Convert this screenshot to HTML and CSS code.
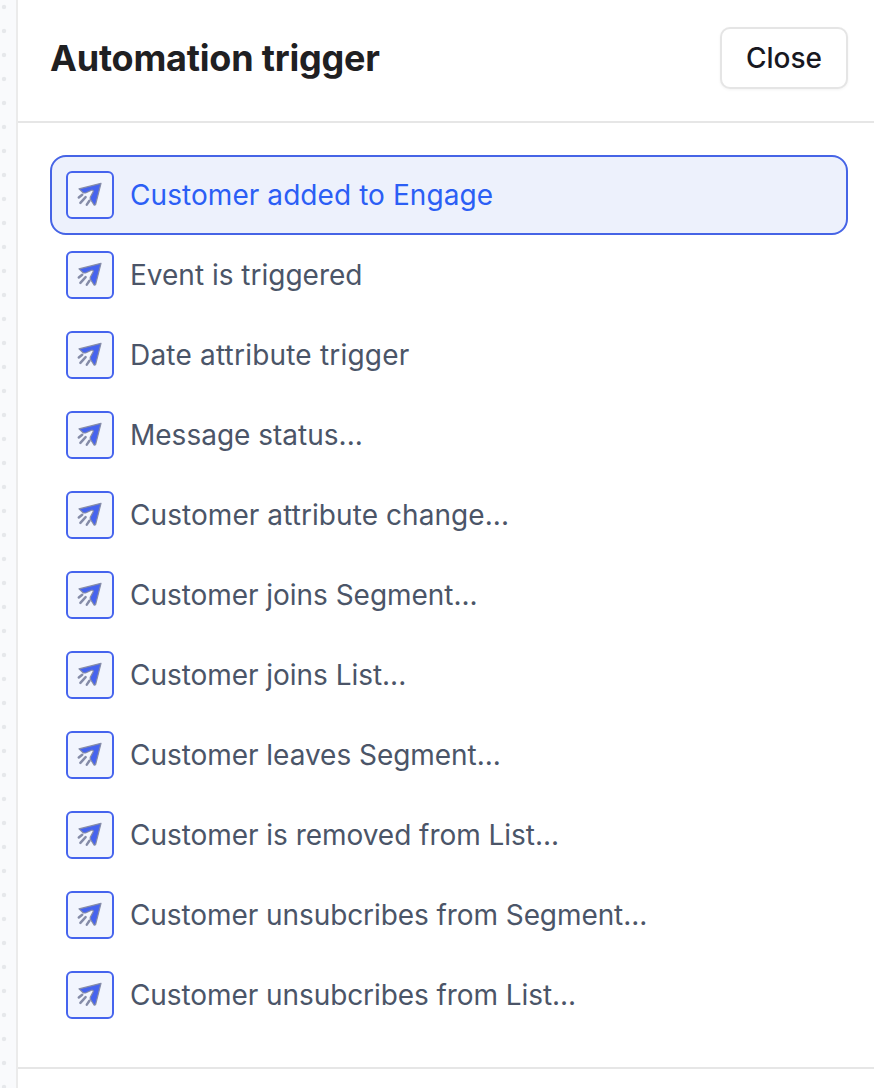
FILE: index.html
```html
<!DOCTYPE html>
<html lang="en"><head><meta charset="utf-8"><title>Automation trigger</title><link rel="stylesheet" href="styles.css"></head>
<body>
<svg width="0" height="0" class="defs"><symbol id="send" viewBox="0 0 48 48"><path d="M35 12.3 13 17.9l4.4 4.1h2.2l5.8-2.8c1.2-.6 2.3.6 1.7 1.7l-2.9 5.3v1.8l4 6.2 1.4-.6z" fill="#4664ee" stroke="#858ca8" stroke-width="1.2" stroke-linejoin="round"/><path d="m16.2 23.7-3.4 2.7M19.6 26.2l-5.2 5.6M23.4 29.8l-2.6 3.8" fill="none" stroke="#858ca8" stroke-width="2.5" stroke-linecap="round"/></symbol></svg>
<div class="canvas"></div>
<main class="panel">
<header class="head"><h1 class="title">Automation trigger</h1><button class="close">Close</button></header>
<ul class="list">
<li class="item active"><span class="icon"><svg><use href="#send"/></svg></span>Customer added to Engage</li>
<li class="item"><span class="icon"><svg><use href="#send"/></svg></span>Event is triggered</li>
<li class="item wide"><span class="icon"><svg><use href="#send"/></svg></span>Date attribute trigger</li>
<li class="item"><span class="icon"><svg><use href="#send"/></svg></span>Message status...</li>
<li class="item roomy"><span class="icon"><svg><use href="#send"/></svg></span>Customer attribute change...</li>
<li class="item snug"><span class="icon"><svg><use href="#send"/></svg></span>Customer joins Segment...</li>
<li class="item snug"><span class="icon"><svg><use href="#send"/></svg></span>Customer joins List...</li>
<li class="item snug"><span class="icon"><svg><use href="#send"/></svg></span>Customer leaves Segment...</li>
<li class="item snug"><span class="icon"><svg><use href="#send"/></svg></span>Customer is removed from List...</li>
<li class="item tight"><span class="icon"><svg><use href="#send"/></svg></span>Customer unsubcribes from Segment...</li>
<li class="item tight"><span class="icon"><svg><use href="#send"/></svg></span>Customer unsubcribes from List...</li>
</ul>
</main>
</body></html>
```
FILE: styles.css
```css
* { box-sizing: border-box; }
body { margin: 0; height: 1088px; display: flex; overflow: hidden; background: #fff; font-family: Inter, sans-serif; }
.defs { display: none; }
.canvas { width: 16px; background: radial-gradient(circle at 4px 7px, #e6e8eb 1.8px, transparent 2.6px) 0 0 / 24px 24px #f9fafc; }
.panel { flex: 1; border-left: 2px solid #ebebeb; }
.head { height: 123px; padding: 27px 26px 0 32px; display: flex; justify-content: space-between; align-items: flex-start; border-bottom: 2px solid #e6e6e6; }
.title { margin: 7px 0 0; font-size: 36px; line-height: 48px; font-weight: 650; color: #1f2022; letter-spacing: -0.2px; }
.close { width: 128px; height: 62px; padding: 0; border: 2px solid #e5e5e5; border-radius: 10px; background: #fff; font: 500 28px Inter, sans-serif; color: #18181f; box-shadow: 0 1px 3px #0000000d; }
.list { list-style: none; margin: 0; padding: 32px 26px 32px 32px; border-bottom: 2px solid #e6e6e6; }
.item { height: 80px; padding: 0 14px; border: 2px solid transparent; border-radius: 16px; display: flex; align-items: center; gap: 16px; font-size: 28px; color: #4b5568; white-space: nowrap; }
.active { background: #edf1fc; border-color: #4664e6; color: #2b5ef5; letter-spacing: 0.07px; }
.wide { letter-spacing: 0.2px; }
.roomy { letter-spacing: 0.07px; }
.snug { letter-spacing: -0.04px; }
.tight { letter-spacing: -0.08px; }
.icon { width: 48px; height: 48px; border: 2px solid #4664ee; border-radius: 6px; background: #f2f5fe; }
.icon svg { display: block; width: 48px; height: 48px; margin: -2px; }
```
